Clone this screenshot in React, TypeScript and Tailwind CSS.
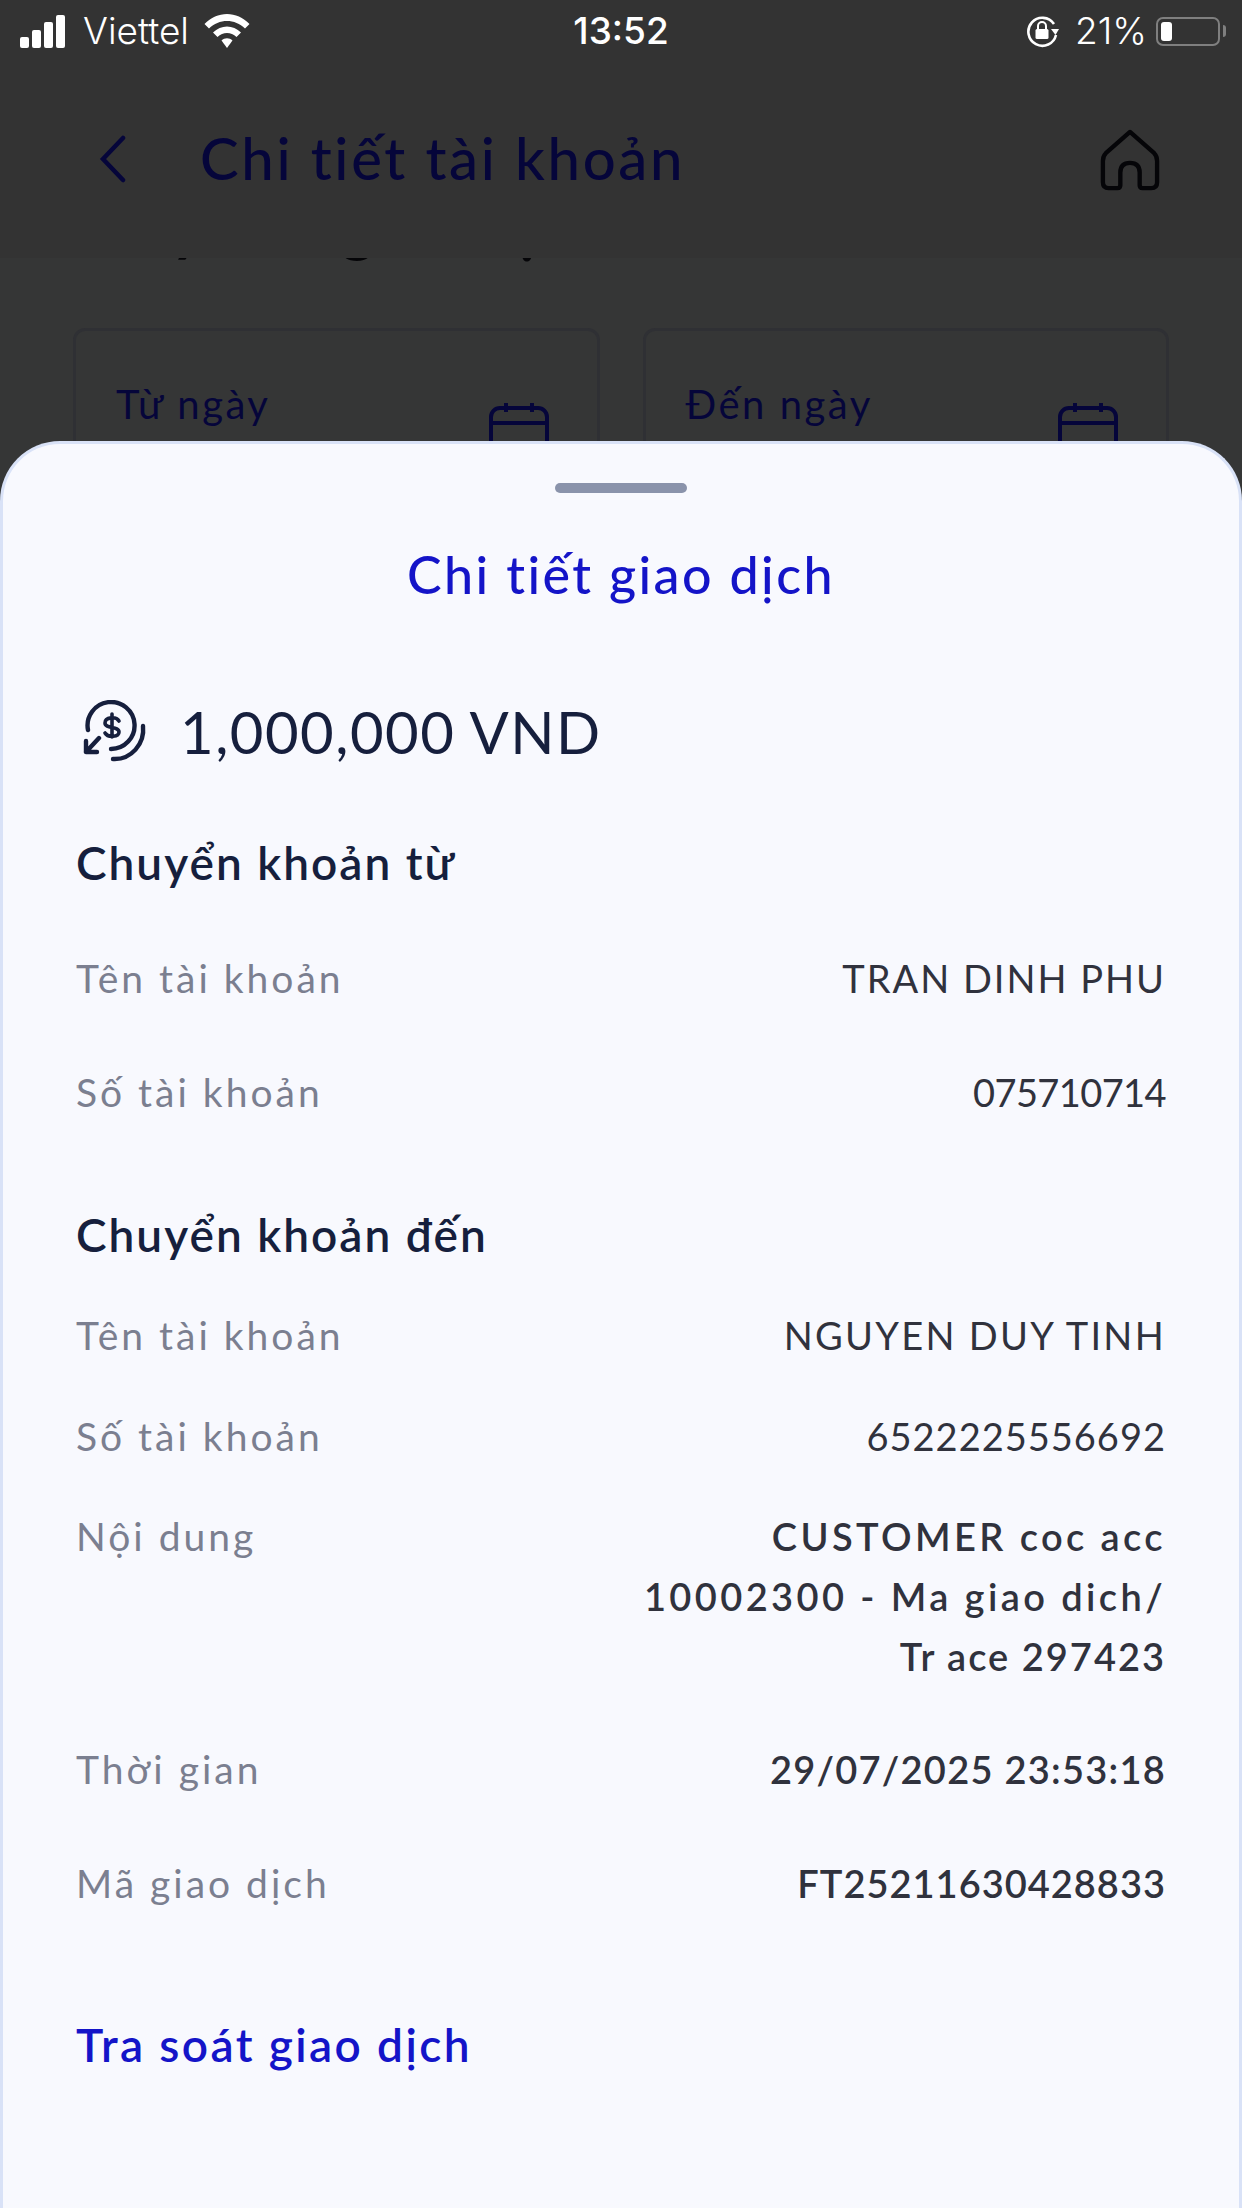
import React from 'react';

const sansFont = "font-['Lato','Inter','Noto_Sans',sans-serif]";

const StatusBar = () => (
  <div className="relative z-20 flex h-[62px] items-center justify-between bg-[#333333] pl-[20px] pr-[16px] text-white font-['Inter',sans-serif]">
    <div className="flex items-center">
      <div className="flex items-end gap-[3px]">
        <div className="h-[11px] w-[9px] rounded-[2px] bg-white" />
        <div className="h-[18px] w-[9px] rounded-[2px] bg-white" />
        <div className="h-[26px] w-[9px] rounded-[2px] bg-white" />
        <div className="h-[33px] w-[9px] rounded-[2px] bg-white" />
      </div>
      <span className="ml-[18px] text-[37px] font-light">Viettel</span>
      <svg className="ml-[15px]" width="46" height="36" viewBox="0 0 46 36" fill="white">
        <path d="M0.5 11 C13 -2.5 33 -2.5 45.5 11 L41 15.5 C31 5.5 15 5.5 5 15.5 Z" />
        <path d="M9 19.5 C17 11.5 29 11.5 37 19.5 L32.5 24 C27 18.5 19 18.5 13.5 24 Z" />
        <path d="M17.5 27.5 C20.5 24.5 25.5 24.5 28.5 27.5 L23 35 Z" />
      </svg>
    </div>
    <span className="absolute left-1/2 -translate-x-1/2 text-[37px] font-medium">13:52</span>
    <div className="flex items-center">
      <svg width="32" height="36" viewBox="0 0 32 36" fill="none">
        <path d="M27 11 A14 14 0 1 0 29 22" stroke="white" strokeWidth="2.6" />
        <path d="M24 16 L32 16 L28.5 22 Z" fill="white" />
        <rect x="8.5" y="16" width="13" height="10" rx="1.5" fill="white" />
        <path d="M11 16 V13 a4 4 0 0 1 8 0 V16" stroke="white" strokeWidth="2" />
      </svg>
      <span className="ml-[16px] text-[37px] font-light">21%</span>
      <div className="ml-[9px] flex h-[29px] w-[64px] items-center rounded-[7px] border-[2px] border-[#7f7f7f] p-[3px]">
        <div className="h-full w-[11px] rounded-[3px] bg-white" />
      </div>
      <div className="ml-[3px] h-[12px] w-[3px] rounded-r-[3px] bg-[#7f7f7f]" />
    </div>
  </div>
);

const CalendarIcon = () => (
  <svg width="60" height="60" viewBox="0 0 60 60" fill="none" stroke="#05053a" strokeWidth="4" className="mt-[21px]">
    <rect x="2" y="6" width="56" height="50" rx="9" />
    <path d="M2 21 H58 M17 1 V10 M43 1 V10" />
  </svg>
);

const DateField = ({ label }: { label: string }) => (
  <div className="flex h-[240px] flex-1 justify-between rounded-[12px] border-[3px] border-[#2f3034] pl-[40px] pr-[48px] pt-[50px]">
    <span className="text-[40px] leading-[46px] tracking-[2.5px] text-[#05053a]">{label}</span>
    <CalendarIcon />
  </div>
);

const Row = ({ label, value, valueClass, className }: { label: string; value: React.ReactNode; valueClass: string; className?: string }) => (
  <div className={`flex items-start justify-between ${className ?? ''}`}>
    <span className="text-[39px] leading-[60px] tracking-[3px] text-[#7b7f90]">{label}</span>
    <span className={`text-right text-[38px] leading-[60px] text-[#30323d] ${valueClass}`}>{value}</span>
  </div>
);

export default function App() {
  return (
    <div className={`relative h-[2208px] w-[1242px] overflow-hidden bg-[#353636] ${sansFont}`}>
      <StatusBar />
      <div className="relative z-10 flex h-[196px] items-center bg-[#333333] pl-[96px] pr-[82px]">
        <svg width="36" height="48" viewBox="0 0 36 48" fill="none" stroke="#05053a" strokeWidth="4.5" strokeLinecap="round" className="-mt-[2px]">
          <path d="M27 3 L7 24 L27 45" />
        </svg>
        <span className="ml-[68px] -mt-[5px] flex-1 text-[58px] font-medium tracking-[2.7px] text-[#05053a]">Chi tiết tài khoản</span>
        <svg width="60" height="62" viewBox="0 0 62 64" fill="none" stroke="#050508" strokeWidth="4.5" strokeLinejoin="round">
          <path d="M31 3 L56 25 Q59 28 59 33 V55 Q59 61 53 61 H44 Q41 61 41 58 V45 Q41 35 31 35 Q21 35 21 45 V58 Q21 61 18 61 H9 Q3 61 3 55 V33 Q3 28 6 25 Z" />
        </svg>
      </div>
      <div className="-mt-[62px] px-[76px] text-[62px] font-bold leading-[60px] tracking-[2px] text-[#050508]">Truy vấn giao dịch</div>
      <div className="mt-[72px] flex gap-[43px] pl-[73px] pr-[73px]">
        <DateField label="Từ ngày" />
        <DateField label="Đến ngày" />
      </div>

      {/* bottom sheet */}
      <div className="absolute inset-x-0 bottom-0 z-30 h-[1767px] rounded-t-[60px] border-x-[3px] border-t-[3px] border-[#d9e2f7] bg-[#f8f9fe] px-[73px]">
        <div className="mx-auto mt-[39px] h-[10px] w-[132px] rounded-full bg-[#8a93ab]" />
        <h2 className="mt-[46px] text-center text-[52px] font-medium leading-[70px] tracking-[2.4px] text-[#1414c8]">Chi tiết giao dịch</h2>
        <div className="mt-[88px] flex items-center">
          <svg width="66" height="64" viewBox="0 0 66 64" fill="none" stroke="#161f3d" strokeWidth="4.4" strokeLinecap="round" strokeLinejoin="round" className="ml-[7px]">
            <path d="M5 30 A23.5 23.5 0 1 1 28 49" />
            <path d="M60 26 C62 44 48 60 30 59" />
            <path d="M29 14 V37 M36 21 C33 16 22 17 22 23 C22 29 36 26 36 32 C36 37 25 38 22 33" strokeWidth="3.6" />
            <path d="M16 38 L3 52 M3 41 V52 H14" />
          </svg>
          <span className="ml-[31px] text-[58px] leading-[70px] tracking-[1.5px] text-[#161f3d]">1,000,000 VND</span>
        </div>
        <h3 className="mt-[66px] text-[46px] font-semibold leading-[60px] tracking-[2px] text-[#161f3d]">Chuyển khoản từ</h3>
        <Row className="mt-[55px]" label="Tên tài khoản" value="TRAN DINH PHU" valueClass="tracking-[2px]" />
        <Row className="mt-[54px]" label="Số tài khoản" value="075710714" valueClass="tracking-[-0.6px]" />
        <h3 className="mt-[83px] text-[46px] font-semibold leading-[60px] tracking-[2px] text-[#161f3d]">Chuyển khoản đến</h3>
        <Row className="mt-[40px]" label="Tên tài khoản" value="NGUYEN DUY TINH" valueClass="tracking-[2.3px]" />
        <Row className="mt-[41px]" label="Số tài khoản" value="6522225556692" valueClass="tracking-[1px]" />
        <Row
          className="mt-[40px]"
          label="Nội dung"
          valueClass="font-semibold tracking-[3.4px]"
          value={<>CUSTOMER coc acc<br />10002300 - Ma giao dich/<br /><span className="tracking-[2px]">Tr ace 297423</span></>}
        />
        <Row className="mt-[53px]" label="Thời gian" value="29/07/2025 23:53:18" valueClass="font-semibold tracking-[1.25px]" />
        <Row className="mt-[54px]" label="Mã giao dịch" value="FT25211630428833" valueClass="font-semibold tracking-[1px]" />
        <div className="mt-[102px] text-[46px] font-semibold leading-[60px] tracking-[2.4px] text-[#1414c8]">Tra soát giao dịch</div>
      </div>
    </div>
  );
}
